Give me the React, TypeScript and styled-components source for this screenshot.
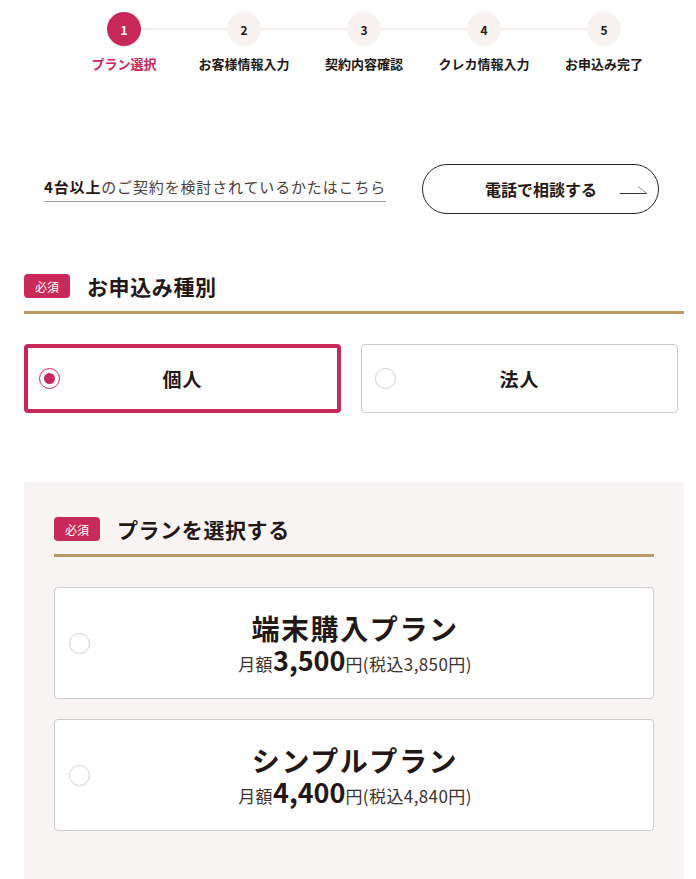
import styled, { createGlobalStyle } from 'styled-components';

const GlobalStyle = createGlobalStyle`
  html, body {
    margin: 0;
    padding: 0;
    background: #fefefe;
  }

  body {
    font-family: "Noto Sans CJK JP", "Noto Sans", sans-serif;
    color: #231815;
  }

  * {
    box-sizing: border-box;
  }
`;

const crimson = '#c7295a';
const gold = '#b99b5f';
const ink = '#231815';

const steps = ['プラン選択', 'お客様情報入力', '契約内容確認', 'クレカ情報入力', 'お申込み完了'];

const plans = [
  { name: '端末購入プラン', price: '3,500', tax: '3,850' },
  { name: 'シンプルプラン', price: '4,400', tax: '4,840' },
];

export default function App() {
  return (
    <>
      <GlobalStyle />
      <Page>
        <Stepper>
          {steps.map((label, i) => (
            <Step key={label} $first={i === 0}>
              <StepCircle $active={i === 0}>{i + 1}</StepCircle>
              <StepLabel $active={i === 0}>{label}</StepLabel>
            </Step>
          ))}
        </Stepper>

        <ConsultRow>
          <ConsultText>
            <strong>4台以上</strong>のご契約を検討されているかたはこちら
          </ConsultText>
          <PhoneButton type="button">
            電話で相談する
            <ArrowIcon width="28" height="10" viewBox="0 0 28 10" fill="none">
              <path d="M0 8.5H27" stroke="#3a302d" strokeWidth="1" />
              <path d="M18 1.5L27 8.5" stroke="#9a9391" strokeWidth="1" />
            </ArrowIcon>
          </PhoneButton>
        </ConsultRow>

        <Heading>
          <Badge>必須</Badge>
          <HeadingText>お申込み種別</HeadingText>
        </Heading>

        <TypeGrid>
          <TypeOption $selected>
            <Radio $checked />
            <OptionLabel>個人</OptionLabel>
          </TypeOption>
          <TypeOption>
            <Radio />
            <OptionLabel>法人</OptionLabel>
          </TypeOption>
        </TypeGrid>

        <PlanSection>
          <Heading>
            <Badge>必須</Badge>
            <HeadingText>プランを選択する</HeadingText>
          </Heading>

          <PlanList>
            {plans.map((plan) => (
              <PlanCard key={plan.name}>
                <Radio />
                <PlanBody>
                  <PlanName>{plan.name}</PlanName>
                  <PlanPrice>
                    月額<PriceValue>{plan.price}</PriceValue>円(税込{plan.tax}円)
                  </PlanPrice>
                </PlanBody>
              </PlanCard>
            ))}
          </PlanList>
        </PlanSection>
      </Page>
    </>
  );
}

const Page = styled.div`
  width: 696px;
  min-height: 879px;
  padding: 12px 12px 0 24px;
  overflow: hidden;
`;

const Stepper = styled.ol`
  display: flex;
  list-style: none;
  margin: 0 0 0 40px;
  padding: 0;
`;

const Step = styled.li<{ $first?: boolean }>`
  position: relative;
  width: 120px;
  display: flex;
  flex-direction: column;
  align-items: center;

  &::before {
    content: '';
    display: ${(p) => (p.$first ? 'none' : 'block')};
    position: absolute;
    top: 16px;
    left: -60px;
    width: 120px;
    height: 2px;
    background: #f6eeee;
    z-index: 0;
  }
`;

const StepCircle = styled.span<{ $active?: boolean }>`
  position: relative;
  z-index: 1;
  width: 34px;
  height: 34px;
  border-radius: 50%;
  display: flex;
  align-items: center;
  justify-content: center;
  font-size: 12px;
  font-weight: 700;
  background: ${(p) => (p.$active ? crimson : '#f7f1f0')};
  color: ${(p) => (p.$active ? '#fff' : ink)};
`;

const StepLabel = styled.span<{ $active?: boolean }>`
  margin-top: 8px;
  font-size: 13px;
  font-weight: 700;
  line-height: 19px;
  white-space: nowrap;
  color: ${(p) => (p.$active ? crimson : ink)};
`;

const ConsultRow = styled.div`
  display: flex;
  align-items: center;
  justify-content: space-between;
  margin-top: 91px;
  padding-right: 25px;
`;

const ConsultText = styled.p`
  margin: 0 0 0 20px;
  padding: 0 0 3px;
  font-size: 15px;
  line-height: 22px;
  letter-spacing: 0.85px;
  color: #4a403d;
  border-bottom: 1px solid #9b9b9b;

  strong {
    font-weight: 700;
    color: ${ink};
  }
`;

const PhoneButton = styled.button`
  width: 237px;
  height: 50px;
  border: 1px solid #2b2220;
  border-radius: 25px;
  background: #fff;
  display: flex;
  align-items: center;
  justify-content: center;
  padding: 0 0 0 52px;
  font-family: inherit;
  font-size: 16px;
  font-weight: 700;
  color: ${ink};
  letter-spacing: 0;
`;

const ArrowIcon = styled.svg`
  margin-left: 23px;
  margin-top: 1px;
  flex-shrink: 0;
`;

const Heading = styled.div`
  display: flex;
  align-items: center;
  gap: 17px;
  padding-bottom: 13px;
  border-bottom: 3px solid ${gold};
  margin-top: 60px;
`;

const Badge = styled.span`
  width: 46px;
  height: 24px;
  border-radius: 4px;
  background: ${crimson};
  color: #fff;
  font-size: 12px;
  display: flex;
  align-items: center;
  justify-content: center;
`;

const HeadingText = styled.h2`
  margin: 0;
  font-size: 21px;
  font-weight: 700;
  line-height: 24px;
  letter-spacing: 0.6px;
`;

const TypeGrid = styled.div`
  display: grid;
  grid-template-columns: 317px 317px;
  gap: 20px;
  margin-top: 30px;
`;

const TypeOption = styled.label<{ $selected?: boolean }>`
  position: relative;
  height: 69px;
  border-radius: 4px;
  background: #fff;
  border: ${(p) => (p.$selected ? `4px solid ${crimson}` : '1px solid #cccccc')};
  display: flex;
  align-items: center;
  padding-left: ${(p) => (p.$selected ? '11px' : '13px')};
`;

const Radio = styled.span<{ $checked?: boolean }>`
  width: 21px;
  height: 21px;
  border-radius: 50%;
  flex-shrink: 0;
  background: #fff;
  border: 1px solid ${(p) => (p.$checked ? crimson : '#cfcfcf')};
  display: flex;
  align-items: center;
  justify-content: center;

  &::after {
    content: '';
    display: ${(p) => (p.$checked ? 'block' : 'none')};
    width: 11px;
    height: 11px;
    border-radius: 50%;
    background: ${crimson};
  }
`;

const OptionLabel = styled.span`
  position: absolute;
  inset: 0;
  display: flex;
  align-items: center;
  justify-content: center;
  font-size: 19px;
  font-weight: 700;
  letter-spacing: 1px;
  pointer-events: none;
`;

const PlanSection = styled.section`
  margin-top: 69px;
  background: #f8f4f3;
  padding: 1px 30px 60px;

  ${Heading} {
    margin-top: 34px;
  }
`;

const PlanList = styled.div`
  display: flex;
  flex-direction: column;
  gap: 20px;
  margin-top: 30px;
`;

const PlanCard = styled.label`
  position: relative;
  height: 112px;
  border-radius: 4px;
  border: 1px solid #cccccc;
  background: #fff;
  display: flex;
  align-items: center;
  padding-left: 14px;
`;

const PlanBody = styled.div`
  position: absolute;
  inset: 0;
  display: flex;
  flex-direction: column;
  align-items: center;
  justify-content: center;
  padding-top: 4px;
  padding-left: 2px;
`;

const PlanName = styled.span`
  font-size: 28px;
  font-weight: 700;
  line-height: 34px;
  letter-spacing: 1.6px;
`;

const PlanPrice = styled.span`
  font-size: 17px;
  line-height: 30px;
  letter-spacing: 0.4px;
  color: #3a302d;
  display: flex;
  align-items: baseline;
`;

const PriceValue = styled.span`
  font-size: 27px;
  font-weight: 700;
  letter-spacing: 0;
  color: ${ink};
  line-height: 30px;
`;
